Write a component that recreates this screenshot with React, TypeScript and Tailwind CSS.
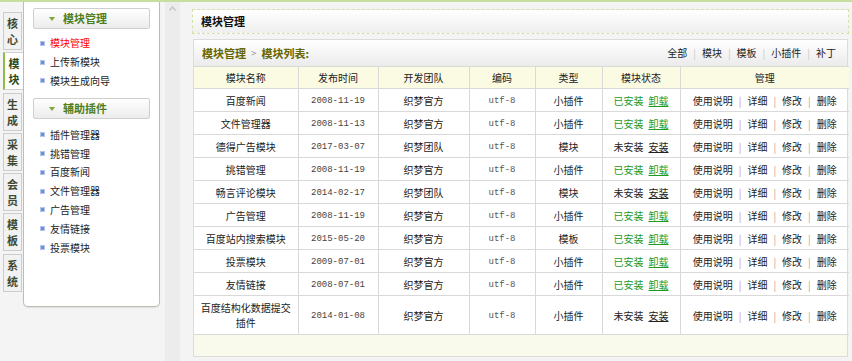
import React from 'react';

type Row = {
  name: string;
  date: string;
  team: string;
  type: string;
  installed: boolean;
};

const rows: Row[] = [
  { name: '百度新闻', date: '2008-11-19', team: '织梦官方', type: '小插件', installed: true },
  { name: '文件管理器', date: '2008-11-13', team: '织梦官方', type: '小插件', installed: true },
  { name: '德得广告模块', date: '2017-03-07', team: '织梦团队', type: '模块', installed: false },
  { name: '挑错管理', date: '2008-11-19', team: '织梦官方', type: '小插件', installed: true },
  { name: '畅言评论模块', date: '2014-02-17', team: '织梦团队', type: '模块', installed: false },
  { name: '广告管理', date: '2008-11-19', team: '织梦官方', type: '小插件', installed: true },
  { name: '百度站内搜索模块', date: '2015-05-20', team: '织梦官方', type: '模板', installed: true },
  { name: '投票模块', date: '2009-07-01', team: '织梦官方', type: '小插件', installed: true },
  { name: '友情链接', date: '2008-07-01', team: '织梦官方', type: '小插件', installed: true },
  { name: '百度结构化数据提交插件', date: '2014-01-08', team: '织梦官方', type: '小插件', installed: false },
];

const tabs = ['核心', '模块', '生成', '采集', '会员', '模板', '系统'];

const group1 = ['模块管理', '上传新模块', '模块生成向导'];
const group2 = ['插件管理器', '挑错管理', '百度新闻', '文件管理器', '广告管理', '友情链接', '投票模块'];

const cjk = "font-['Noto_Sans_CJK_SC',sans-serif]";
const mono = "font-['Liberation_Mono',monospace]";

const SectionHead = ({ label }: { label: string }) => (
  <div className="h-[21px] flex items-center border border-[#cfcfcf] bg-gradient-to-b from-[#ffffff] to-[#ececec] rounded-[2px]">
    <svg width="6" height="4" viewBox="0 0 6 4" className="ml-[15px] mr-[8px]">
      <path d="M0 0 L6 0 L3 4 Z" fill="#7aa83a" />
    </svg>
    <span className="text-[11px] font-bold text-[#4f7f1d] leading-none">{label}</span>
  </div>
);

const MenuItem = ({ label, active }: { label: string; active?: boolean }) => (
  <div className="h-[18.8px] flex items-center pl-[7px]">
    <span className="w-[5px] h-[5px] bg-[#6c8fd6] border border-[#b5c6ea] mr-[5px] box-border" />
    <span className={`text-[10px] leading-none ${active ? 'text-[#ff0000]' : 'text-[#222]'}`}>{label}</span>
  </div>
);

const Sep = ({ color }: { color: string }) => <span className={`mx-[6px] ${color}`}>|</span>;

export default function App() {
  return (
    <div className={`w-[852px] h-[361px] overflow-hidden bg-[#f4f4f4] ${cjk} flex flex-col`}>
      <div className="h-[2px] bg-[#c6df9f] shrink-0" />
      <div className="flex flex-1 min-h-0">
        {/* left tabs */}
        <div className="w-[23px] pt-[10px] pl-[3px] flex flex-col gap-[2.3px]">
          {tabs.map((t) =>
            t === '模块' ? (
              <div
                key={t}
                className="h-[38px] w-[20px] bg-white border-l-[2px] border-[#8cbf4a] border-y border-y-[#d0d0d0] flex items-center justify-center"
              >
                <span className="text-[11px] font-bold leading-[16px] text-[#2e4a12] w-[11px] text-center">{t}</span>
              </div>
            ) : (
              <div
                key={t}
                className="h-[38px] w-[19px] bg-[#f2f2f2] border border-[#cccccc] flex items-center justify-center"
              >
                <span className="text-[11px] font-bold leading-[16px] text-[#3d4a33] w-[11px] text-center">{t}</span>
              </div>
            )
          )}
        </div>

        {/* left menu panel */}
        <div className="w-[137px] h-[305px] bg-white border-x border-b border-[#bdbdb2] rounded-b-[5px] px-[9px] pt-[6px] shadow-[0_1px_1px_rgba(0,0,0,0.08)]">
          <SectionHead label="模块管理" />
          <div className="mt-[5px]">
            {group1.map((g, i) => (
              <MenuItem key={g} label={g} active={i === 0} />
            ))}
          </div>
          <div className="mt-[8px]">
            <SectionHead label="辅助插件" />
          </div>
          <div className="mt-[6px]">
            {group2.map((g) => (
              <MenuItem key={g} label={g} />
            ))}
          </div>
        </div>

        {/* splitter */}
        <div className="w-[5px]" />
        <div className="w-[15px] bg-[#ececec] flex justify-center pt-[4px]">
          <svg width="7" height="5" viewBox="0 0 7 5">
            <path d="M0.5 4.5 L3.5 1 L6.5 4.5" stroke="#c4c4c4" strokeWidth="1.2" fill="none" />
          </svg>
        </div>

        {/* main */}
        <div className="flex-1 pl-[12px] pr-[3px] pt-[7px] flex flex-col">
          <div className="h-[25px] border border-dashed border-[#d3e2a8] bg-gradient-to-b from-[#ffffff] to-[#efefef] flex items-center pl-[8px]">
            <span className="text-[11px] font-bold text-[#111] leading-none">模块管理</span>
          </div>

          <div className="mt-[5px] ml-[1px] mr-[1px] w-[655px] border border-[#dcdcdc] bg-white">
            <div className="h-[26px] bg-gradient-to-b from-[#ffffff] to-[#ebebeb] flex items-center justify-between pl-[8px] pr-[9px]">
              <div className="text-[11px] font-bold text-[#666600] leading-none flex items-center">
                模块管理
                <span className="mx-[5px] text-[#9a9a9a] font-normal text-[10px]">&gt;</span>
                模块列表:
              </div>
              <div className="text-[10px] text-[#222] leading-none flex items-center mr-[2px]">
                全部<Sep color="text-[#c8c8c8]" />模块<Sep color="text-[#c8c8c8]" />模板
                <Sep color="text-[#c8c8c8]" />小插件<Sep color="text-[#c8c8c8]" />补丁
              </div>
            </div>

            <table className="w-[655px] border-collapse table-fixed text-[10px] text-[#222]">
              <colgroup>
                <col className="w-[104px]" />
                <col className="w-[80px]" />
                <col className="w-[91px]" />
                <col className="w-[66px]" />
                <col className="w-[67px]" />
                <col className="w-[78px]" />
                <col className="w-[169px]" />
              </colgroup>
              <thead>
                <tr className="h-[22px] bg-[#fbfbe4]">
                  {['模块名称', '发布时间', '开发团队', '编码', '类型', '模块状态', '管理'].map((h) => (
                    <th key={h} className="border border-[#d9d9d9] font-normal text-center leading-none first:border-l-0 last:border-r-0">
                      {h}
                    </th>
                  ))}
                </tr>
              </thead>
              <tbody>
                {rows.map((r) => {
                  const tall = r.name.length > 9;
                  return (
                    <tr key={r.name} className={tall ? 'h-[39px]' : 'h-[23px]'}>
                      <td className="border border-[#d9d9d9] border-l-0 text-center px-[4px] leading-[15px]">{r.name}</td>
                      <td className={`border border-[#d9d9d9] text-center ${mono} text-[9px] leading-none pt-[3px] text-[#444]`}>{r.date}</td>
                      <td className="border border-[#d9d9d9] text-center">{r.team}</td>
                      <td className={`border border-[#d9d9d9] text-center ${mono} text-[9px] leading-none pt-[3px] text-[#555]`}>utf-8</td>
                      <td className="border border-[#d9d9d9] text-center">{r.type}</td>
                      <td className="border border-[#d9d9d9] text-center">
                        {r.installed ? (
                          <>
                            <span className="text-[#1e9a1e]">已安装</span>
                            <span className="ml-[5px] text-[#1e9a1e] underline">卸载</span>
                          </>
                        ) : (
                          <>
                            <span className="text-[#222]">未安装</span>
                            <span className="ml-[5px] text-[#222] underline">安装</span>
                          </>
                        )}
                      </td>
                      <td className="border border-[#d9d9d9] border-r-0 text-center">
                        使用说明<Sep color="text-[#c79a9a]" />详细<Sep color="text-[#c79a9a]" />修改
                        <Sep color="text-[#c79a9a]" />删除
                      </td>
                    </tr>
                  );
                })}
              </tbody>
            </table>
            <div className="h-[21px] bg-[#f9f9ec]" />
          </div>
        </div>
      </div>
    </div>
  );
}
